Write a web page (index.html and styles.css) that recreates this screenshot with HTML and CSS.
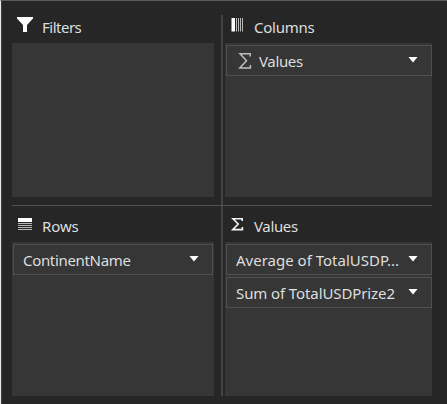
FILE: index.html
```
<!DOCTYPE html>
<html lang="en">
<head>
<meta charset="utf-8">
<title>PivotTable Fields</title>
<link rel="stylesheet" href="styles.css">
</head>
<body>
<main class="panel">
  <section class="area filters">
    <h2 class="head"><svg class="icon" width="18" height="18" viewBox="0 0 18 18"><path fill="#fff" d="M1 1H17V2.5L11 9V16H7V9L1 2.5Z"/></svg><span class="t-filters">Filters</span></h2>
    <div class="box"></div>
  </section>
  <section class="area columns">
    <h2 class="head"><svg class="icon" width="18" height="18" viewBox="0 0 18 18"><path fill="#fff" d="M1.5 2H5V15.5H1.5Z"/><path fill="#b8b8b8" d="M6 2h1v13.5H6zM8 2h1v13.5H8zM10 2h1v13.5h-1zM12 2h1v13.5h-1z"/></svg><span class="t-columns">Columns</span></h2>
    <div class="box">
      <div class="field"><svg class="sum" width="14" height="18" viewBox="0 0 14 18"><path fill="none" stroke="#bdbdbd" stroke-width="1.5" d="M12.2 4.5V1.7H2L8.5 8.7L1.8 16H12.4V13"/></svg><span class="label t-values">Values</span><i class="arrow"></i></div>
    </div>
  </section>
  <section class="area rows">
    <h2 class="head"><svg class="icon" width="18" height="18" viewBox="0 0 18 18"><path fill="#fff" d="M2 3H16V7H2Z"/><path fill="#b8b8b8" d="M2 8h14v1H2zM2 10h14v1H2zM2 12h14v1H2zM2 14h14v1H2z"/></svg><span class="t-rows">Rows</span></h2>
    <div class="box">
      <div class="field"><span class="label t-cont">ContinentName</span><i class="arrow"></i></div>
    </div>
  </section>
  <section class="area values">
    <h2 class="head"><svg class="icon" width="18" height="18" viewBox="0 0 18 18"><path fill="none" stroke="#f4f4f4" stroke-width="1.6" d="M12.2 6V3.8H3L8.2 9L2.7 14.6H12.4V12"/></svg><span class="t-values">Values</span></h2>
    <div class="box">
      <div class="field"><span class="label t-avg">Average of TotalUSDP...</span><i class="arrow"></i></div>
      <div class="field"><span class="label t-sum">Sum of TotalUSDPrize2</span><i class="arrow"></i></div>
    </div>
  </section>
</main>
</body>
</html>
```
FILE: styles.css
```
* { box-sizing: border-box; }
body { margin: 0; background: #262626; }
.panel {
  width: 447px;
  height: 404px;
  padding: 14px 14px 8px 10px;
  border-top: 1px solid #5a5d5a;
  border-left: 1px solid #e8e8e8;
  box-shadow: inset 1px 0 #3d4242;
  display: grid;
  grid-template-columns: 210px 212px;
  grid-template-rows: 190px 191px;
  color: #dedede;
  font: 15px/22px "Noto Sans", "Open Sans", sans-serif;
  overflow: hidden;
}
.area { display: flex; flex-direction: column; }
.filters, .rows { padding: 0 7px 0 1px; }
.columns, .values { border-left: 2px solid #444; padding: 0 1px 0 2px; }
.filters, .columns { padding-bottom: 8px; }
.rows, .values { position: relative; }
.rows::before, .values::before {
  content: "";
  position: absolute;
  top: 0;
  left: 1px;
  right: 0;
  height: 1px;
  background: #505050;
}
.values::before { left: -2px; right: 1px; }
.head {
  display: flex;
  align-items: flex-start;
  height: 28px;
  margin: 0;
  padding: 1px 0 0 4px;
  font: inherit;
  white-space: nowrap;
}
.rows .head, .values .head { height: 37px; padding-top: 10px; }
.icon { flex: none; margin-right: 8px; }
.columns .icon, .values .icon { margin: 0 6px 0 1px; }
.box { flex: 1; background: #363636; padding: 2px 0 0 1px; }
.rows .box { padding-right: 1px; }
.field {
  display: flex;
  align-items: center;
  height: 31px;
  margin-bottom: 2px;
  padding: 0 13px 0 9px;
  border: 1px solid #4f4f4f;
  white-space: nowrap;
}
.sum { margin: 0 7px 0 2px; }
.label { flex: 1; }
.t-filters { letter-spacing: -0.5px; }
.t-columns { letter-spacing: -0.25px; }
.t-values { letter-spacing: -0.35px; }
.t-rows { letter-spacing: -0.1px; }
.t-cont { letter-spacing: -0.33px; }
.t-sum { letter-spacing: -0.1px; }
.arrow {
  width: 10px;
  height: 6px;
  margin-top: -2px;
  background: #fff;
  clip-path: polygon(0 0, 100% 0, 50% 100%);
}
```
